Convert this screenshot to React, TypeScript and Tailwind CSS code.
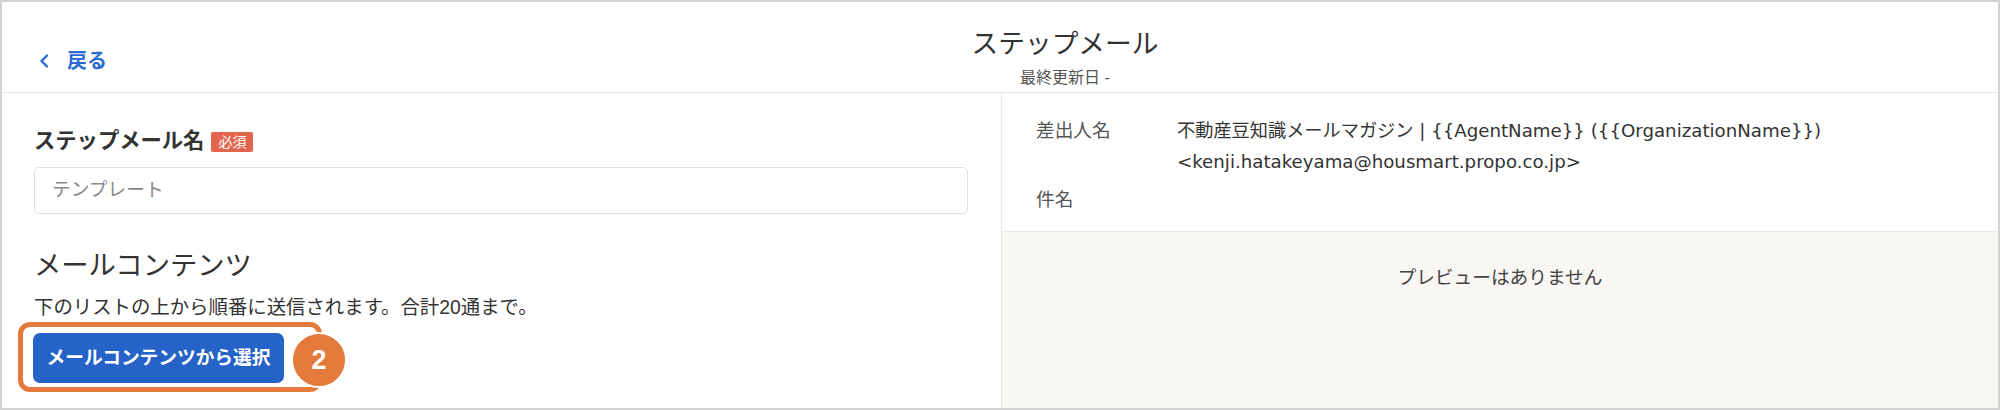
import React from 'react';

const FONT = '"Liberation Sans", "Noto Sans CJK JP", "Noto Sans", sans-serif';
const WIDE_FONT = '"DejaVu Sans", "Noto Sans CJK JP", sans-serif';

function BackLink() {
  return (
    <a href="#" className="flex items-center text-[#2a6bd1] font-bold text-[20px] leading-[20px]">
      <svg width="11" height="14" viewBox="0 0 11 14" className="mr-[17px]">
        <path d="M8 1.5 L2.5 7 L8 12.5" fill="none" stroke="currentColor" strokeWidth="2.4" strokeLinecap="round" strokeLinejoin="round" />
      </svg>
      戻る
    </a>
  );
}

function Header() {
  return (
    <header className="relative h-[91px] border-b border-[#e6e8eb] flex flex-col items-center pt-[29px] pl-[130px]">
      <div className="absolute left-[37px] top-[49px]">
        <BackLink />
      </div>
      <h1 className="text-[26.7px] leading-[27px] text-[#333]">ステップメール</h1>
      <p className="mt-[12px] text-[16px] leading-[16px] text-[#555]">最終更新日 -</p>
    </header>
  );
}

function LeftPanel() {
  return (
    <section className="w-[1000px] border-r border-[#e6e8eb] pl-[32px] pr-[32px] pt-[38px]">
      <div className="flex items-center">
        <span className="text-[21.3px] leading-[21px] font-bold text-[#333]">ステップメール名</span>
        <span className="ml-[7px] bg-[#e2654d] text-white text-[14px] leading-[20px] px-[7px] rounded-[2px]">必須</span>
      </div>
      <div className="mt-[15px] h-[47px] w-[934px] rounded-[5px] border border-[#dcdfe4] flex items-center pl-[17px] text-[18.7px] text-[#8a8a8a]">
        テンプレート
      </div>
      <h2 className="mt-[38px] text-[27.3px] leading-[27px] text-[#333]">メールコンテンツ</h2>
      <p className="mt-[19px] text-[19.4px] leading-[19px] text-[#333]">下のリストの上から順番に送信されます。合計20通まで。</p>
      <div className="relative mt-[5px] -ml-[16px] w-[304px] h-[70px] rounded-[12px] border-[5px] border-[#e3793a] pl-[10px] pt-[6px]">
        <button className="h-[50px] w-[251px] rounded-[7px] bg-[#2563c8] text-white font-bold text-[18.7px] flex items-center justify-center">
          メールコンテンツから選択
        </button>
        <div className="absolute left-[268px] top-[5px] w-[56px] h-[56px] rounded-full bg-[#e3793a] border-[2px] border-white flex items-center justify-center text-white font-bold text-[27px]">
          2
        </div>
      </div>
    </section>
  );
}

function RightPanel() {
  return (
    <section className="flex-1 flex flex-col">
      <div className="pl-[34px] pt-[22px] pb-[16px] text-[18.7px] leading-[31px]">
        <div className="flex">
          <span className="w-[141px] text-[#555]">差出人名</span>
          <div className="text-[#333] text-[18.2px]" style={{ fontFamily: WIDE_FONT }}>
            <div>不動産豆知識メールマガジン | {'{{AgentName}}'} ({'{{OrganizationName}}'})</div>
            <div>&lt;kenji.hatakeyama@housmart.propo.co.jp&gt;</div>
          </div>
        </div>
        <div className="flex mt-[7px]">
          <span className="w-[141px] text-[#555]">件名</span>
        </div>
      </div>
      <div className="flex-1 bg-[#f8f7f3] border-t border-[#e8e8e8] pt-[36px] text-center text-[18.7px] leading-[20px] text-[#444]">
        プレビューはありません
      </div>
    </section>
  );
}

export default function App() {
  return (
    <div className="w-[2000px] h-[410px] border-2 border-[#d2d2d2] bg-white flex flex-col overflow-hidden" style={{ fontFamily: FONT }}>
      <Header />
      <main className="flex flex-1">
        <LeftPanel />
        <RightPanel />
      </main>
    </div>
  );
}
